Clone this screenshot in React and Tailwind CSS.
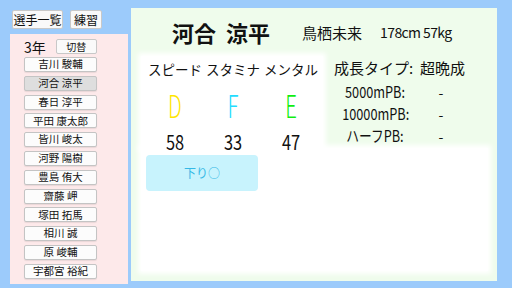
import React from 'react';

const names = ["吉川 駿輔", "河合 涼平", "春日 淳平", "平田 康太郎", "皆川 峻太", "河野 陽樹", "豊島 侑大", "齋藤 岬", "塚田 拓馬", "相川 誠", "原 峻輔", "宇都宮 裕紀"];

const stats = [
    { label: "スピード", rank: "D", color: "text-[#ffe600]", value: 58 },
    { label: "スタミナ", rank: "F", color: "text-[#22dcff]", value: 33 },
    { label: "メンタル", rank: "E", color: "text-[#10ee10]", value: 47 },
];

const pbs = ["5000mPB:", "10000mPB:", "ハーフPB:"];

const App = () => {
    return (
        <div className="w-[512px] h-[288px] bg-[#9ccbfb] flex overflow-hidden text-[#111]" style={{ fontFamily: '"Noto Sans CJK JP", "Noto Sans", sans-serif' }}>
            <div className="w-[118px] ml-[10px] flex flex-col">
                <div className="flex gap-[7px] mt-[10px] ml-[2px]">
                    <button className="w-[51px] h-[19px] bg-[#f9f9f9] border border-[#c8c8c8] rounded-[2px] text-[12px] leading-none">選手一覧</button>
                    <button className="w-[32px] h-[19px] bg-[#f9f9f9] border border-[#c8c8c8] rounded-[2px] text-[12px] leading-none">練習</button>
                </div>
                <div className="mt-[5px] h-[250px] bg-[#fde9ea] flex flex-col">
                    <div className="flex items-center mt-[5px] h-[15px]">
                        <span className="ml-[14px] text-[14px] leading-none">3年</span>
                        <button className="ml-[10px] w-[41px] h-[15px] bg-[#fafafa] border border-[#c8c8c8] rounded-[2px] text-[10px] leading-none">切替</button>
                    </div>
                    <div className="flex flex-col gap-[3.8px] mt-[3px] ml-[14px]">
                        {names.map((n, i) => (
                            <button key={i} className={`w-[73px] h-[15px] border border-[#c4c4c4] rounded-[2px] text-[10.5px] leading-none shadow-[0_1px_1px_rgba(0,0,0,0.08)] ${i === 1 ? 'bg-[#dedede]' : 'bg-[#fcfcfc]'}`}>{n}</button>
                        ))}
                    </div>
                </div>
            </div>

            <div className="ml-[3px] mt-[8px] w-[366px] h-[273px] bg-[#effcec] flex flex-col">
                <div className="h-[48px] flex items-center">
                    <div className="ml-[41px] flex gap-[10px] text-[22px] font-bold leading-none">
                        <span>河合</span><span>涼平</span>
                    </div>
                    <span className="ml-[32px] text-[15px] leading-none">鳥栖未来</span>
                    <span className="ml-[18px] text-[14px] leading-none tracking-[-0.6px]">178cm 57kg</span>
                </div>
                <div className="flex h-[92px]">
                    <div className="ml-[10px] w-[182px] h-[92px] bg-white shadow-[0_0_5px_3px_#ffffff] flex flex-col">
                        <div className="grid grid-cols-3 w-[174px] ml-[5px] mt-[4px] h-[18px] text-[13.5px] leading-[18px] text-center whitespace-nowrap">
                            {stats.map(s => <span key={s.label}>{s.label}</span>)}
                        </div>
                        <div className="grid grid-cols-3 w-[174px] ml-[5px] mt-[12px] h-[30px] text-center">
                            {stats.map(s => (
                                <span key={s.rank} className={`${s.color} text-[31px] leading-[30px] font-light inline-block scale-x-[0.66]`}>{s.rank}</span>
                            ))}
                        </div>
                        <div className="grid grid-cols-3 w-[174px] ml-[5px] mt-[12px] h-[20px] text-center">
                            {stats.map(s => (
                                <span key={s.value} className="text-[20px] leading-[20px] inline-block scale-x-[0.82]">{s.value}</span>
                            ))}
                        </div>
                    </div>
                    <div className="flex flex-col">
                        <div className="ml-[11px] mt-[2px] h-[20px] text-[15px] leading-[20px] whitespace-nowrap">成長タイプ:&nbsp;&nbsp;超晩成</div>
                        <div className="flex flex-col mt-[3px]">
                            {pbs.map(p => (
                                <div key={p} className="flex h-[22px] items-center">
                                    <span className="ml-[12px] w-[80px] text-center text-[15.5px] leading-none scale-x-[0.82] whitespace-nowrap">{p}</span>
                                    <span className="w-[52px] text-center text-[14px] leading-none">-</span>
                                </div>
                            ))}
                        </div>
                    </div>
                </div>
                <div className="ml-[10px] w-[347px] h-[123px] bg-white shadow-[0_0_5px_3px_#ffffff]">
                    <div className="ml-[5px] mt-[7px] w-[112px] h-[36px] bg-[#c8f3fd] rounded-[4px] flex items-center justify-center text-[12px] text-[#35b8e6]">
                        下り○
                    </div>
                </div>
            </div>
        </div>
    );
};

export default App;
